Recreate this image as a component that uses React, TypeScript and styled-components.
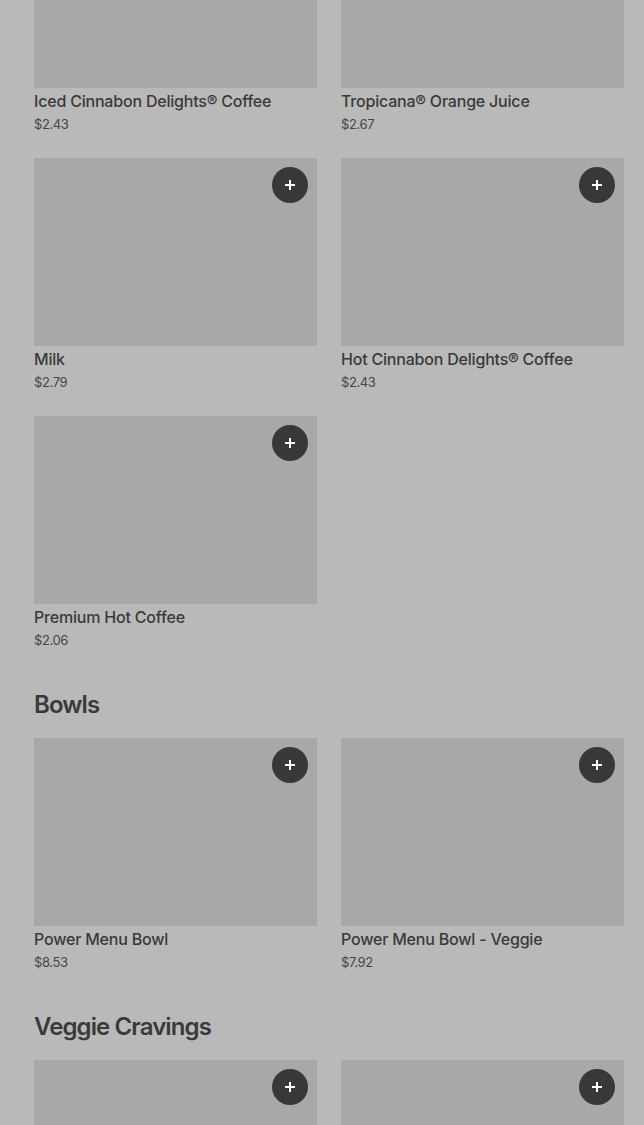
import React from 'react';
import styled, { createGlobalStyle } from 'styled-components';

const GlobalStyle = createGlobalStyle`
  html, body {
    margin: 0;
    padding: 0;
    background: #b9b9b9;
    overflow: hidden;
  }
  body {
    font-family: Inter, "Noto Sans", "Liberation Sans", sans-serif;
  }
`;

type Item = { name?: string; price?: string; add?: boolean };
type Section = { title?: string; items: Item[] };

// the page is scrolled: first row sits partly above the fold, last row below it
const sections: Section[] = [
  {
    items: [
      { name: 'Iced Cinnabon Delights® Coffee', price: '$2.43', add: true },
      { name: 'Tropicana® Orange Juice', price: '$2.67', add: true },
      { name: 'Milk', price: '$2.79', add: true },
      { name: 'Hot Cinnabon Delights® Coffee', price: '$2.43', add: true },
      { name: 'Premium Hot Coffee', price: '$2.06', add: true },
    ],
  },
  {
    title: 'Bowls',
    items: [
      { name: 'Power Menu Bowl', price: '$8.53', add: true },
      { name: 'Power Menu Bowl - Veggie', price: '$7.92', add: true },
    ],
  },
  {
    title: 'Veggie Cravings',
    items: [{ add: true }, { add: true }],
  },
];

function PlusIcon() {
  return (
    <svg width="12" height="12" viewBox="0 0 12 12">
      <path d="M6 1v10M1 6h10" stroke="#fff" strokeWidth="2" />
    </svg>
  );
}

function App() {
  return (
    <>
      <GlobalStyle />
      <Page>
        {sections.map((s, i) => (
          <Block key={i}>
            {s.title && <Heading>{s.title}</Heading>}
            <Grid>
              {s.items.map((it, j) => (
                <Card key={j}>
                  <Thumb>
                    {it.add && (
                      <AddButton aria-label="add">
                        <PlusIcon />
                      </AddButton>
                    )}
                  </Thumb>
                  {it.name && <Name>{it.name}</Name>}
                  {it.price && <Price>{it.price}</Price>}
                </Card>
              ))}
            </Grid>
          </Block>
        ))}
      </Page>
    </>
  );
}

export default App;

const Page = styled.div`
  display: flex;
  flex-direction: column;
  gap: 37px;
  padding: 0 20px 0 34px;
  margin-top: -100px;
`;

const Block = styled.section`
  display: flex;
  flex-direction: column;
  gap: 17px;
`;

const Heading = styled.h2`
  margin: 0;
  font-size: 24px;
  line-height: 32px;
  font-weight: 600;
  letter-spacing: -0.9px;
  color: #3a3a3a;
`;

const Grid = styled.div`
  display: grid;
  grid-template-columns: 283px 283px;
  column-gap: 24px;
  row-gap: 22px;
`;

const Card = styled.div`
  display: flex;
  flex-direction: column;
`;

const Thumb = styled.div`
  position: relative;
  height: 188px;
  background: #a8a8a8;
`;

const AddButton = styled.button`
  position: absolute;
  top: 9px;
  right: 9px;
  width: 36px;
  height: 36px;
  border-radius: 50%;
  border: none;
  padding: 0;
  background: #383838;
  display: flex;
  align-items: center;
  justify-content: center;
  cursor: pointer;
`;

const Name = styled.div`
  margin-top: 2px;
  font-size: 16px;
  line-height: 22px;
  font-weight: 500;
  letter-spacing: -0.2px;
  color: #3a3a3a;
`;

const Price = styled.div`
  font-size: 13px;
  line-height: 24px;
  font-weight: 400;
  letter-spacing: -0.4px;
  color: #464646;
`;
